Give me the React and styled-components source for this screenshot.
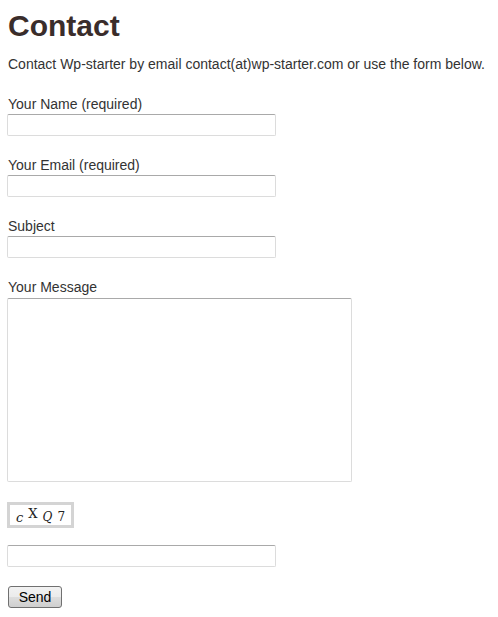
import styled, { createGlobalStyle } from "styled-components";

const GlobalStyle = createGlobalStyle`
  body {
    margin: 0;
    background: #fff;
    font-family: "Liberation Sans", Arial, sans-serif;
    color: #333;
  }
`

const Page = styled.div`
  padding: 0 7px;
`

const Title = styled.h1`
  margin: 6px 0 0 1px;
  font-size: 30px;
  line-height: 40px;
  font-weight: bold;
  color: #3a2d2b;
`

const Intro = styled.p`
  margin: 9px 0 22px 1px;
  font-size: 14px;
  line-height: 18px;
  white-space: nowrap;
`

const Form = styled.form`
  display: flex;
  flex-direction: column;
  align-items: flex-start;
`

const Field = styled.div`
  display: flex;
  flex-direction: column;
  align-items: flex-start;
  margin-bottom: ${p => p.$gap || 20}px;
`

const Label = styled.label`
  font-size: 14px;
  line-height: 18px;
  margin: 0 0 ${p => p.$space || 1}px 1px;
`

const TextInput = styled.input`
  box-sizing: border-box;
  width: 269px;
  height: 22px;
  margin: 0;
  padding: 2px 4px;
  border: 1px solid #dcdcdc;
  border-top-color: #a9a9a9;
  border-radius: 2px;
  background: #fff;
  font-family: inherit;
  font-size: 14px;
`

const MessageBox = styled.textarea`
  box-sizing: border-box;
  width: 345px;
  height: 184px;
  margin: 0;
  padding: 4px;
  border: 1px solid #dcdcdc;
  border-top-color: #a9a9a9;
  border-radius: 2px;
  resize: none;
  font-family: inherit;
  font-size: 14px;
`

const Captcha = styled.div`
  box-sizing: border-box;
  width: 67px;
  height: 26px;
  margin-bottom: 17px;
  border: 3px solid #d4d4d4;
  display: flex;
  align-items: center;
  justify-content: center;
  gap: 5px;
  background: #fff;
  font-family: "DejaVu Serif", "Liberation Serif", serif;
  color: #222;
`

const Glyph = styled.span`
  font-size: ${p => p.$size}px;
  font-style: ${p => (p.$italic ? "italic" : "normal")};
  transform: translateY(${p => p.$shift}px);
  line-height: 1;
`

const SendButton = styled.button`
  box-sizing: border-box;
  width: 54px;
  height: 22px;
  margin: 0 0 0 1px;
  padding: 0;
  border: 1px solid #707070;
  border-radius: 3px;
  background: linear-gradient(#f2f2f2, #ebebeb 50%, #dddddd 51%, #cfcfcf);
  font-family: "Liberation Sans", Arial, sans-serif;
  font-size: 14px;
  color: #000;
`

const fields = [
  { id: "name", label: "Your Name (required)" },
  { id: "email", label: "Your Email (required)" },
  { id: "subject", label: "Subject" },
]

const App = () => {
  return (
    <Page>
      <GlobalStyle />
      <Title>Contact</Title>
      <Intro>Contact Wp-starter by email contact(at)wp-starter.com or use the form below.</Intro>
      <Form onSubmit={e => e.preventDefault()}>
        {fields.map(f => (
          <Field key={f.id}>
            <Label htmlFor={f.id}>{f.label}</Label>
            <TextInput id={f.id} type="text" />
          </Field>
        ))}
        <Field>
          <Label htmlFor="message" $space={2}>Your Message</Label>
          <MessageBox id="message" />
        </Field>
        <Captcha>
          <Glyph $size={13} $italic $shift={2}>c</Glyph>
          <Glyph $size={13} $shift={-2}>X</Glyph>
          <Glyph $size={12} $italic $shift={2}>Q</Glyph>
          <Glyph $size={12} $shift={2}>7</Glyph>
        </Captcha>
        <Field $gap={19}>
          <TextInput type="text" aria-label="captcha" />
        </Field>
        <SendButton type="submit">Send</SendButton>
      </Form>
    </Page>
  )
}

export default App
